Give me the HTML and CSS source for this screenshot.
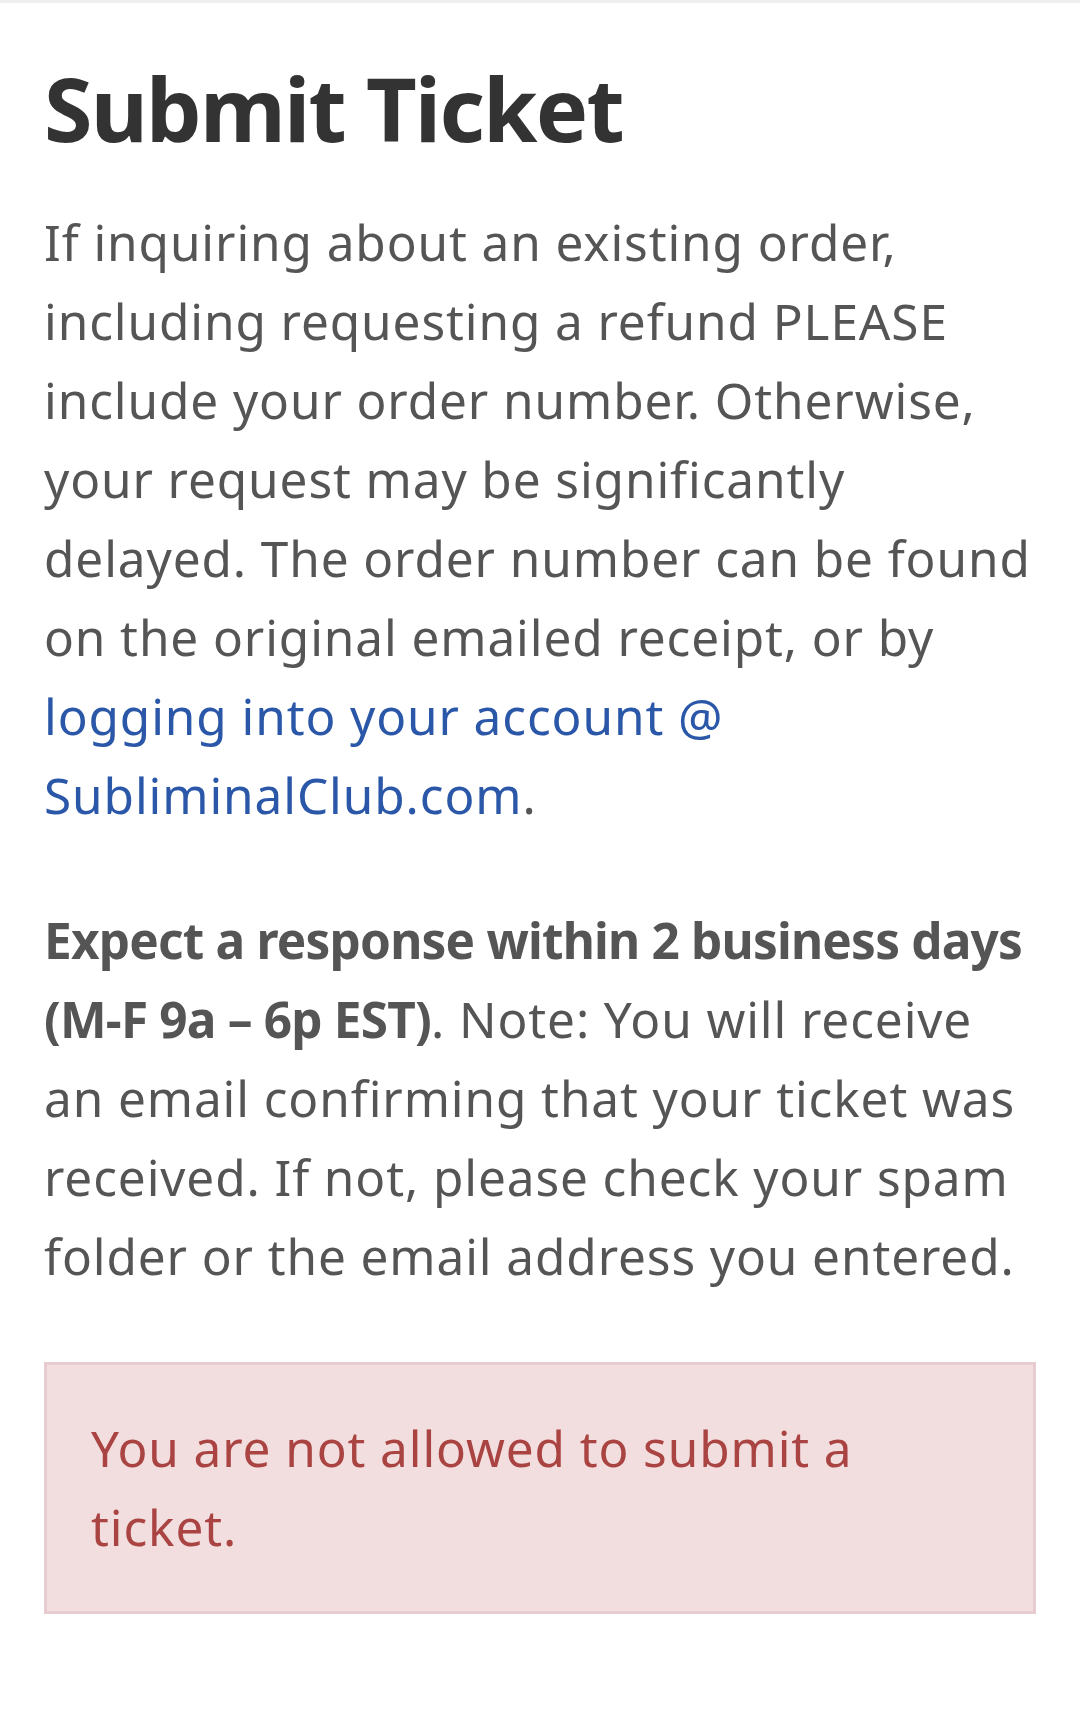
FILE: index.html
```html
<!DOCTYPE html>
<html>
<head>
  <title>Submit Ticket</title>
  <link rel="stylesheet" href="styles.css">
</head>
<body>
  <div class="topbar"></div>
  <div class="content">
    <h1>Submit Ticket</h1>
    <p>If inquiring about an existing order, including requesting a refund PLEASE include your order number. Otherwise, your request may be significantly delayed. The order number can be found on the original emailed receipt, or by <a href="#">logging into your account @ SubliminalClub.com</a>.</p>
    <p><strong>Expect a response within 2 business days (M-F 9a &ndash; 6p EST)</strong>. Note: You will receive an email confirming that your ticket was received. If not, please check your spam folder or the email address you entered.</p>
    <div class="alert">You are not allowed to submit a ticket.</div>
  </div>
</body>
</html>
```

FILE: styles.css
```css
body {
  margin: 0;
  font-family: "Noto Sans", "Open Sans", sans-serif;
  background: #fff;
  color: #555;
}
.topbar {
  height: 3px;
  background-color: #eef0ef;
}
.content {
  padding: 53px 44px 0;
}
h1 {
  margin: 0 0 41px;
  font-size: 88px;
  line-height: 1.2;
  font-weight: 700;
  letter-spacing: -1.8px;
  color: #333;
}
p {
  margin: 0 0 66px;
  font-size: 49.5px;
  line-height: 79px;
  letter-spacing: 0.9px;
}
p a {
  color: #2b57a8;
  text-decoration: none;
}
p strong {
  font-weight: 700;
  letter-spacing: -0.8px;
}
.alert {
  padding: 44px;
  font-size: 49.5px;
  line-height: 79px;
  letter-spacing: 0.9px;
  color: #a94442;
  background-color: #f2dede;
  border: 3px solid #e6cbd0;
}
```
